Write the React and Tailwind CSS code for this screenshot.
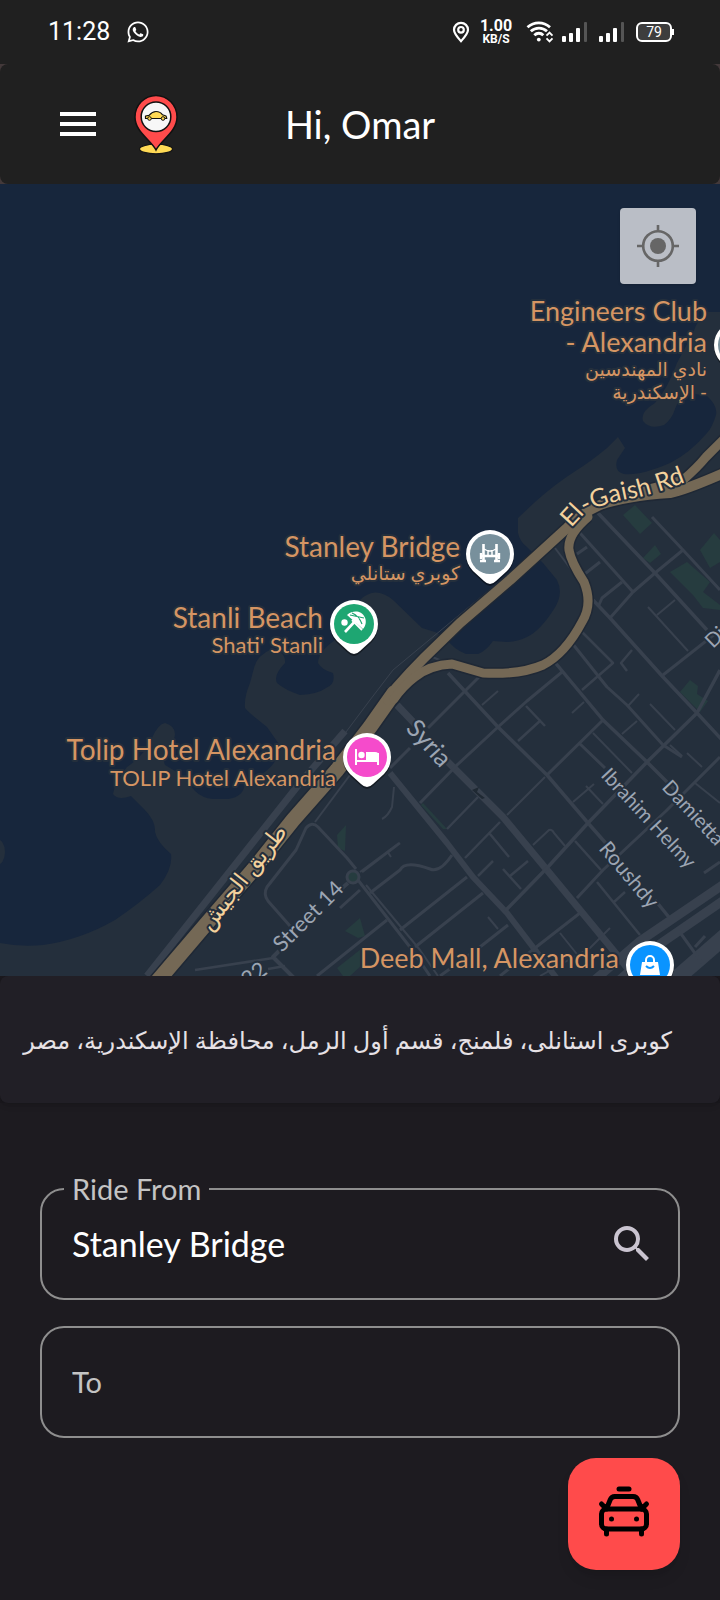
import React from "react";
import { MdMenu, MdSearch } from "react-icons/md";
import { FaWhatsapp } from "react-icons/fa";
import { CarTaxiFront } from "lucide-react";

const HAND = "Lato, 'DejaVu Sans', sans-serif";

function Signal() {
  return (
    <svg width="26" height="20" viewBox="0 0 26 20" aria-hidden="true">
      <rect x="0" y="14" width="4" height="6" rx="1" fill="#fff" />
      <rect x="7" y="11" width="4" height="9" rx="1" fill="#fff" />
      <rect x="14" y="6" width="4" height="14" rx="1" fill="#fff" />
      <rect x="22" y="0" width="3" height="20" rx="1" fill="#555" />
    </svg>
  );
}

function StatusBar() {
  return (
    <div className="flex h-16 items-center bg-[#202020] pl-12 pr-[46px] text-white">
      <span className="font-[Roboto,sans-serif] text-[25px] leading-8">11:28</span>
      <FaWhatsapp size={24} className="ml-4" />
      <div className="ml-auto flex items-center">
        <svg width="18" height="22" viewBox="0 0 18 22" fill="none" stroke="#fff" strokeWidth="2.2" aria-hidden="true">
          <path d="M9 20.2C5 15.8 2 12.600 2 8.800A7 7 0 0 1 16 8.800C16 12.600 13 15.800 9 20.200Z" />
          <circle cx="9" cy="8.800" r="2.800" />
        </svg>
        <div className="ml-2 w-9 text-center font-[Roboto,sans-serif] font-bold">
          <div className="text-[16px] leading-[14px]">1.00</div>
          <div className="text-[12px] leading-[12px]">KB/S</div>
        </div>
        <svg className="ml-3" width="28" height="22" viewBox="0 0 28 22" fill="none" stroke="#fff" strokeWidth="2.800" aria-hidden="true">
          <path d="M1.500 6.200C8 .3 17.500.3 24 6.200" />
          <path d="M4.800 10.300C9.500 6 16.500 6 21 10.300" />
          <path d="M8.300 14.200C11 11.600 14.800 11.600 17.300 14.200" />
          <circle cx="12.800" cy="18.600" r="1.900" fill="#fff" stroke="none" />
          <path d="M20.500 14.700L23.500 11.700L26.500 14.700M20.500 17.300L23.500 20.300L26.500 17.300" strokeWidth="1.900" />
        </svg>
        <span className="ml-2 flex gap-[11px]">
          <Signal />
          <Signal />
        </span>
        <span className="ml-[11px] flex items-center">
          <span className="flex h-5 w-9 items-center justify-center rounded-md border-2 border-white bg-[#3d3d3d] font-[Roboto,sans-serif] text-[14px] leading-4">
            79
          </span>
          <span className="h-[6px] w-[2px] bg-white" />
        </span>
      </div>
    </div>
  );
}

function Logo() {
  return (
    <svg width="46" height="62" viewBox="133 92 46 62" aria-label="Ride logo" role="img">
      <ellipse cx="156" cy="148" rx="16.500" ry="4.800" fill="#ffda55" stroke="#151515" strokeWidth="1.200" />
      <path d="M156 149C151 139 135 131 135 116A21 21.500 0 0 1 177 116C177 131 161 139 156 149Z" fill="#ff4b4b" stroke="#111" strokeWidth="1.500" />
      <circle cx="156" cy="115.700" r="14.800" fill="#f7f7f7" stroke="#111" strokeWidth="1.500" />
      <path d="M145.500 117.500V115L149 114.300C151.500 111.500 153.500 110.500 156 110.500C159 110.500 161 111.500 162.500 113.800L166 115L166.800 117.500Z" fill="#ffda55" stroke="#111" strokeWidth="1.200" strokeLinejoin="round" />
      <circle cx="149.500" cy="117.500" r="1.800" fill="#ffda55" stroke="#111" />
      <circle cx="163" cy="117.500" r="1.800" fill="#ffda55" stroke="#111" />
    </svg>
  );
}

function Header() {
  return (
    <div className="bg-[#43393a]">
      <header className="grid h-[120px] grid-cols-[1fr_auto_1fr] items-center rounded-lg bg-[#202020] px-[54px] text-white">
        <div className="flex items-center gap-[31px]">
          <button type="button" aria-label="Open menu">
            <MdMenu size={48} />
          </button>
          <Logo />
        </div>
        <h1 className="text-[38px] leading-[48px]">Hi, Omar</h1>
      </header>
    </div>
  );
}

const WATER_EDGE =
  "M0 184H720V312H707Q698 318 693 333L677 363Q668 388 655 403Q640 412 643 421Q650 430 664 425Q672 419 675 409Q678 400 684 392L707 396Q718 406 716 415Q712 428 707 433Q690 453 670 463Q640 476 624 474Q614 472 617 460L625 448L618 437L607 448Q590 462 577 470Q555 484 535 502L518 518V533Q520 542 527 547L543 563L557 580Q564 594 554 609Q540 631 527 637Q517 642 507 642L493 641Q486 651 478 654H466Q453 649 446 638L435 632L422 628L393 600Q375 585 360 600Q354 630 335 640Q318 652 318 663Q322 670 333 673Q336 684 326 688Q318 694 300 695Q285 690 277 683Q273 675 285 663Q286 652 272 649Q257 655 254 668L250 683Q244 697 245 708Q250 714 267 727L281 747Q277 770 245 783Q244 797 228 799H213Q202 798 195 791L180 774L165 765Q160 752 174 739Q178 727 165 723Q158 724 152 738Q145 755 127 767Q115 782 113 794Q118 801 131 796L144 809Q156 821 155 832Q157 842 171 854Q173 868 160 885Q140 903 115 920Q80 940 43 945Q20 947 0 943Z";

const STREETS = [
  [7, "M147 976L300 783L345 731"],
  [1, "M493 587L393 670L370 700L340 740"],
  [7, "M397 705L416 725M445 759L503 817L547 870L613 950L640 984"],
  [6, "M390 773L447 843L473 877L507 913L558 980"],
  [3.5, "M448 673L498 727L547 775L588 823L610 848M655 900L672 921"],
  [3.5, "M553 660L603 720L647 762L672 787L720 840"],
  [3, "M572 643L607 687L627 705L663 745L682 757"],
  [3.500, "M597 512L655 573L707 630"],
  [3, "M652 517L683 550L720 590"],
  [3, "M580 533L633 592"],
  [2, "M555 548L573 572"],
  [3.500, "M593 600L610 618L663 677L697 713L724 742"],
  [3, "M683 550L655 573L633 592L610 618"],
  [3, "M622 582L602 598L598 607M600 562L577 580M587 547L577 554"],
  [3, "M663 675L720 630"],
  [2, "M648 607L688 651M675 600L657 615"],
  [2.500, "M582 632L613 663L582 690M632 650L621 663L627 671"],
  [3, "M562 672L527 701L498 727L457 765L420 803"],
  [3, "M479 677L428 728M410 748L390 768"],
  [2, "M430 656L442 661L450 663M498 691L482 705"],
  [2.500, "M526 706L545 726M541 720L518 741"],
  [3, "M603 720L547 775M579 743L605 768"],
  [2, "M545 777L507 815M593 733L632 773M639 694L628 706M584 702L572 713M637 721L622 734"],
  [2, "M650 704L675 730M670 745L682 756M687 753L702 767M695 783L720 803"],
  [3.500, "M720 670L697 713L647 762L588 823L547 868L505 911"],
  [3, "M720 757L666 811L603 870L577 898"],
  [3, "M580 913L535 948L500 976M720 862L704 873"],
  [2, "M594 784L573 802M586 786L603 804M533 845L549 830Q552 829 554 833L565 846"],
  [2.500, "M575 841L601 870M597 882L640 935M625 892L614 902"],
  [2.500, "M500 822L465 858M490 834L509 857M493 861L478 876M503 869L521 889M528 861L510 876M478 797L447 829"],
  [3, "M508 925L480 947L440 976"],
  [2, "M488 917L498 929M560 933L580 958M610 928L590 948L540 976"],
  [3, "M483 893L415 947M467 877L400 930"],
  [3, "M452 855Q440 873 430 869Q405 860 400 870L370 893"],
  [3, "M358 880L413 951L430 976"],
  [2, "M366 885L420 950L438 976"],
  [2, "M360 872L399 843M387 851L391 857M394 787L392 807Q388 816 382 819"],
  [3, "M387 920L317 976M360 890L340 908"],
  [3, "M356 869L347 858L318 827Q312 821 306 828L296 850L267 887Q263 894 268 901L290 926"],
  [2, "M315 822L350 775"],
  [4, "M348 883L335 894M279 951L273 957L296 980"],
  [2.500, "M195 970L273 958M268 969L285 966M362 872L400 843"],
  [9, "M724 884L640 941L590 984M724 900L660 944L615 984"],
  [16, "M730 932L670 984"],
  [3, "M679 931L702 963M705 936L695 947"],
];

const PARKS = [
  "M623 515L635 505L652 523L640 534Z",
  "M643 558L655 545L661 554L650 563Z",
  "M670 572L687 562L710 582L703 592L720 605V610L703 608L693 595Z",
  "M700 550L714 533L720 540V562L710 568Z",
  "M680 692L690 680L698 686L697 694L708 701L700 712Z",
  "M423 803L447 829L443 829L421 805Z",
  "M337 835L346 825L345 851L338 848Z",
  "M345 931L360 918L365 936L358 938Z",
  "M337 968L361 949L362 965L350 976H343Z",
];

const HIGHWAYS = [
  [15, "M155 984L207 923L253 870L293 820L337 770L370 727L394 693"],
  [10, "M388 700L396 688Q410 672 424 658L460 623L510 580L567 528Q580 514 600 505Q625 496 670 493Q685 490 724 473"],
  [9, "M645 490L683 480Q697 468 706 457L724 439"],
  [9, "M588 517Q567 535 569 550Q571 562 584 582Q593 604 582 622Q565 654 543 665Q520 675 483 673L452 664Q430 665 415 677Q403 686 394 699"],
];

function Pin({ x, y, color, children }) {
  const outline = "M-17 17A24 24 0 1 1 17 17L6 27Q0 33 -6 27Z";
  return (
    <g transform={`translate(${x} ${y})`}>
      <path d={outline} fill="#0006" transform="translate(0 2)" />
      <path d={outline} fill="#fff" />
      <circle r="20" fill={color} />
      {children}
    </g>
  );
}

function MapView() {
  return (
    <section aria-label="Map" className="relative aspect-[720/792] w-full overflow-hidden bg-[#242f3c]">
      <svg className="block h-full w-full" viewBox="0 184 720 792" preserveAspectRatio="xMidYMid slice" style={{ fontFamily: HAND }}>
        <path d={WATER_EDGE} fill="#17263c" />
        <ellipse cx="-3" cy="852" rx="8" ry="13" fill="#242f3c" />
        {PARKS.map((d) => (
          <path key={d} d={d} fill="#263c3f" />
        ))}
        <g fill="none" stroke="#38414e" strokeLinejoin="round">
          {STREETS.map(([w, d]) => (
            <path key={d} d={d} strokeWidth={w} />
          ))}
          <circle cx="353" cy="877" r="6" fill="#263c3f" strokeWidth="3" />
        </g>
        <g fill="none" strokeLinejoin="round">
          {HIGHWAYS.map(([w, d]) => (
            <path key={d} d={d} stroke="#1f2835" strokeWidth={w + 3} />
          ))}
          {HIGHWAYS.map(([w, d]) => (
            <path key={d} d={d} stroke="#746855" strokeWidth={w} strokeLinecap="round" />
          ))}
        </g>
        <path d="M472 790L479 787L477 792L485 798L482 799Z" fill="#1f2933" />

        <g stroke="#242f3c" strokeWidth="4" strokeLinejoin="round" paintOrder="stroke">
          <path id="gaish" d="M571 528L584 514Q605 502 640 497Q668 490 700 476" fill="none" stroke="none" />
          <text fontSize="25" fill="#f3d19c">
            <textPath href="#gaish">El-Gaish Rd</textPath>
          </text>
          <g fill="#9ca5b3">
            <text fontSize="25" transform="translate(405 729) rotate(48)">Syria</text>
            <text fontSize="22" transform="translate(282 953) rotate(-45)">Street 14</text>
            <text fontSize="22" transform="translate(248 988) rotate(-36)">22</text>
            <text fontSize="20" transform="translate(600 776) rotate(47)">Ibrahim Helmy</text>
            <text fontSize="20" transform="translate(661 788) rotate(47)">Damietta</text>
            <text fontSize="21" transform="translate(598 849) rotate(50)">Roushdy</text>
            <text fontSize="20" transform="translate(713 649) rotate(-44)">Di</text>
          </g>
          <text fontSize="23" fill="#f3d19c" textAnchor="middle" transform="translate(249 882) rotate(-52)">طريق الجيش</text>
          <g fill="#d59563" textAnchor="end">
            <text x="707" y="321" fontSize="27">Engineers Club</text>
            <text x="707" y="352" fontSize="27">- Alexandria</text>
            <text x="460" y="557" fontSize="28">Stanley Bridge</text>
            <text x="323" y="628" fontSize="28">Stanli Beach</text>
            <text x="323" y="653" fontSize="22">Shati' Stanli</text>
            <text x="336" y="760" fontSize="28">Tolip Hotel Alexandria</text>
            <text x="336" y="786" fontSize="22">TOLIP Hotel Alexandria</text>
            <text x="619" y="968" fontSize="27">Deeb Mall, Alexandria</text>
          </g>
          <g fill="#d59563" direction="rtl" fontSize="19">
            <text x="707" y="376">نادي المهندسين</text>
            <text x="707" y="399">- الإسكندرية</text>
            <text x="460" y="580">كوبري ستانلي</text>
          </g>
        </g>

        <Pin x={738} y={345} color="#78909c" />
        <Pin x={490} y={554} color="#78909c">
          <g fill="none" stroke="#fff">
            <path d="M-6.500 -10V7M6.500 -10V7" strokeWidth="2.600" />
            <path d="M-10 2H10M-9 -1V5M9 -1V5M-10 7H-4M4 7H10" strokeWidth="2.400" />
            <path d="M-6 -5Q0 -1 6 -5M-2 -4V1M2 -4V1" strokeWidth="1.500" />
          </g>
        </Pin>
        <Pin x={354} y={624} color="#1ea672">
          <circle cx="-9.500" cy="-1.500" r="3.200" fill="#fff" />
          <path d="M-7 -9C0 -15 8 -12 10 -8C13 -4 12 2 9 5Z" fill="#fff" />
          <path d="M-2 -11Q5 -8 8 0M-4 -9L10 -6" stroke="#1ea672" strokeWidth="1.200" fill="none" />
          <path d="M-9 8L4 -6" stroke="#fff" strokeWidth="2.600" />
          <path d="M-2 -4L8 6" stroke="#fff" strokeWidth="2" />
        </Pin>
        <Pin x={367} y={757} color="#f54bcb">
          <g fill="#fff">
            <path d="M-12 -8H-10V3H10V-4H12V8H10V5H-10V8H-12Z" />
            <circle cx="-5.500" cy="-2" r="3.200" />
            <path d="M-1 -5H8Q12 -5 12 -1V3H-1Z" />
          </g>
        </Pin>
        <Pin x={650} y={965} color="#0a94ff">
          <path d="M-8 -3H8L10 10H-10Z" fill="#fff" />
          <path d="M-4 -2V-5A4 4 0 0 1 4 -5V-2" fill="none" stroke="#fff" strokeWidth="2" />
          <path d="M-4 1Q0 5 4 1" fill="none" stroke="#0a94ff" strokeWidth="2" />
        </Pin>
      </svg>
      <button type="button" aria-label="My location" className="absolute right-6 top-6 flex h-[76px] w-[76px] items-center justify-center rounded-sm bg-[#babec6] shadow">
        <svg width="42" height="42" viewBox="0 0 42 42" fill="none" stroke="#666" strokeWidth="2.600" aria-hidden="true">
          <circle cx="21" cy="21" r="14.800" />
          <circle cx="21" cy="21" r="8" fill="#666" stroke="none" />
          <path d="M21 0V6M21 36V42M0 21H6M36 21H42" />
        </svg>
      </button>
    </section>
  );
}

export default function App() {
  return (
    <main className="flex min-h-screen flex-col bg-[#1d1b20]" style={{ fontFamily: HAND }}>
      <StatusBar />
      <Header />
      <MapView />
      <div className="bg-[#1a181d]">
        <p dir="rtl" className="flex min-h-[127px] items-center rounded-lg bg-[#211f26] pl-4 pr-12 text-[24px] leading-10 text-[#e6e1e5] shadow-md">
          كوبرى استانلى، فلمنج، قسم أول الرمل، محافظة الإسكندرية، مصر
        </p>
      </div>
      <form className="flex flex-col gap-[26px] px-10 pt-[85px]">
        <div className="relative flex h-28 items-center rounded-3xl border-2 border-[#8e8e8e] pl-[30px] pr-[22px]">
          <label htmlFor="from" className="absolute -top-4 left-[22px] bg-[#1d1b20] px-2 text-[29px] leading-[30px] text-[#c4c4c4]">
            Ride From
          </label>
          <input id="from" type="text" defaultValue="Stanley Bridge" className="w-full min-w-0 bg-transparent text-[34px] leading-10 text-white outline-none" />
          <button type="button" aria-label="Search" className="text-[#cac4d0]">
            <MdSearch size={48} />
          </button>
        </div>
        <div className="flex h-28 items-center rounded-3xl border-2 border-[#8e8e8e] px-[30px]">
          <input id="to" type="text" aria-label="To" placeholder="To" className="w-full bg-transparent text-[29px] leading-10 text-white outline-none placeholder:text-[#c4c4c4]" />
        </div>
      </form>
      <div className="flex justify-end px-10 pb-[30px] pt-5">
        <button type="button" aria-label="Book a taxi" className="flex h-28 w-28 items-center justify-center rounded-[28px] bg-[#ff4b4b] text-black shadow-lg">
          <CarTaxiFront size={60} />
        </button>
      </div>
    </main>
  );
}
